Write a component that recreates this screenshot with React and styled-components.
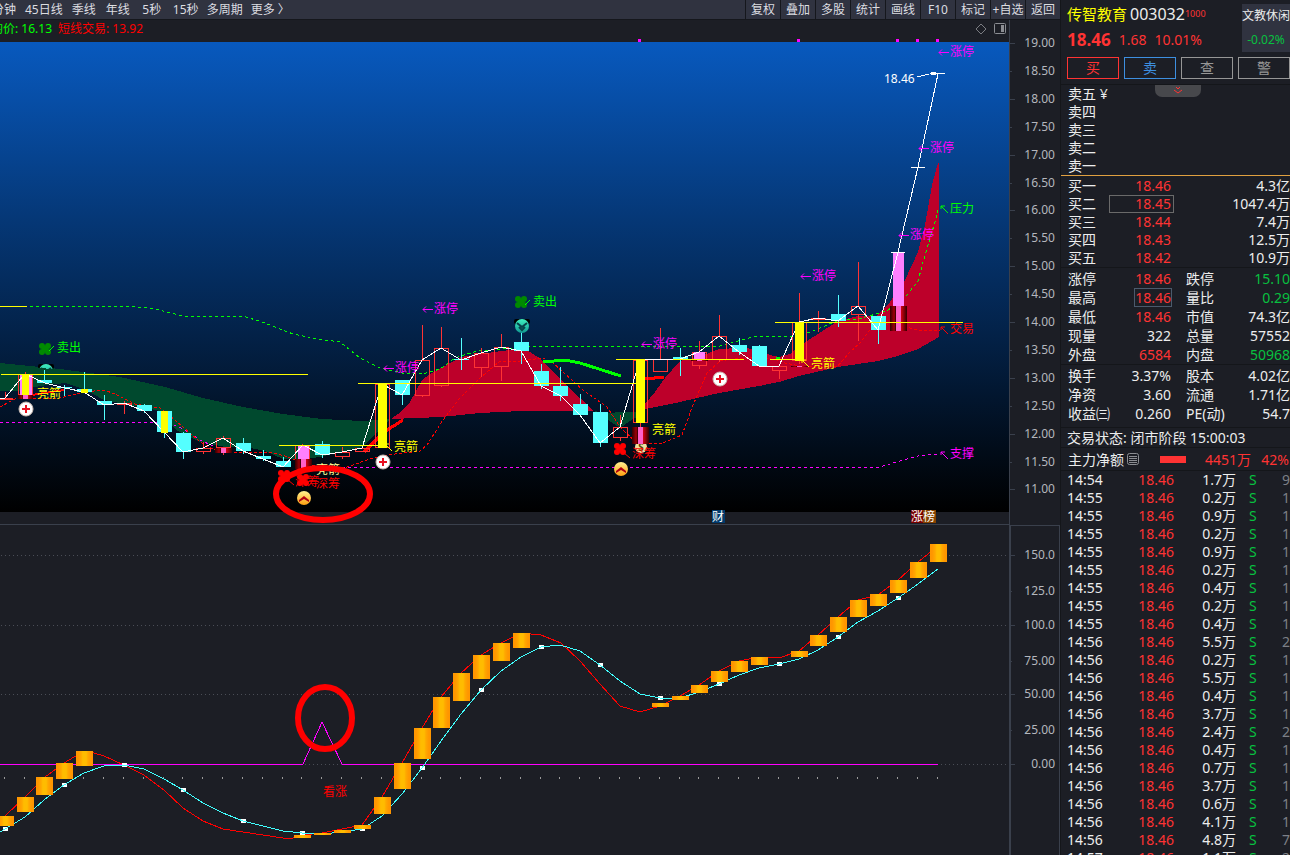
import React from "react";
import styled, { createGlobalStyle } from "styled-components";

const RED = "#ff3333";
const GREEN = "#08c040";
const WHITE = "#eceded";
const GREY = "#7d8087";

const GlobalStyle = createGlobalStyle`
  * {
    box-sizing: border-box;
  }
  body {
    margin: 0;
    background: #1c1e25;
    color: ${WHITE};
    font-family: "Noto Sans", "Noto Sans CJK SC", sans-serif;
    font-size: 14px;
    overflow: hidden;
  }
  button {
    font-family: inherit;
    padding: 0;
    margin: 0;
    cursor: pointer;
  }
`;

const Page = styled.div`
  display: grid;
  grid-template-columns: minmax(0, 1fr) 230px;
  height: 100vh;
  overflow: hidden;
`;
const Main = styled.main`
  display: flex;
  flex-direction: column;
  min-width: 0;
`;
const Toolbar = styled.nav`
  display: flex;
  justify-content: space-between;
  height: 20px;
  background: #303340;
  border-bottom: 1px solid #15171c;
  overflow: hidden;
`;
const Periods = styled.div`
  display: flex;
  margin-left: -13px;
`;
const PeriodButton = styled.button`
  min-width: 34px;
  padding: 0 4px;
  border: 0;
  background: none;
  color: #dcdde0;
  font-size: 12px;
  line-height: 19px;
  white-space: nowrap;
`;
const Tools = styled.div`
  display: flex;
`;
const ToolButton = styled.button`
  width: 35px;
  border: 0;
  border-left: 1px solid #15171c;
  background: none;
  color: #dcdde0;
  font-size: 12px;
  line-height: 19px;
  white-space: nowrap;
`;
const Charts = styled.div`
  flex: 1;
  display: grid;
  grid-template-columns: minmax(0, 1fr) 51px;
  grid-template-rows: 505px minmax(0, 1fr);
  min-height: 0;
`;
const Pane = styled.section`
  display: flex;
  flex-direction: column;
  min-width: 0;
  min-height: 0;
  border-bottom: ${(p) => (p.$divider ? "1px solid #3a404c" : "0")};
`;
const InfoBar = styled.div`
  display: flex;
  align-items: center;
  justify-content: space-between;
  height: 22px;
  padding: 0 3px 4px 0;
  font-size: 12px;
  line-height: 18px;
  overflow: hidden;
`;
const Indicators = styled.div`
  display: flex;
  gap: 6px;
  margin-left: -9px;
  white-space: nowrap;
`;
const Indicator = styled.span`
  color: ${(p) => p.$color};
`;
const InfoIcons = styled.div`
  display: flex;
  align-items: center;
  gap: 7px;
`;
const IconButton = styled.button`
  display: flex;
  border: 0;
  background: none;
`;
const PlotSvg = styled.svg`
  display: block;
  flex: 1;
  width: 100%;
  min-height: 0;
  overflow: visible;
  font-size: 12px;
`;
const PriceSvg = styled(PlotSvg)`
  background: linear-gradient(#0859be, #000) no-repeat;
  background-size: 100% 470px;
`;
const AxisSvg = styled.svg`
  display: block;
  width: 100%;
  height: 100%;
  font-size: 12px;
  fill: #b4b7bd;
  border-left: ${(p) => (p.$boxed ? "2px" : "1px")} solid #3a404c;
  border-top: ${(p) => (p.$boxed ? "1px solid #3a404c" : "0")};
  border-right: ${(p) => (p.$boxed ? "1px solid #3a404c" : "0")};
`;

const Sidebar = styled.aside`
  position: relative;
  display: flex;
  flex-direction: column;
  border-left: 1px solid #14161a;
  overflow: hidden;

  > * {
    flex-shrink: 0;
  }
`;
const Header = styled.header`
  display: flex;
  justify-content: space-between;
  height: 57px;
  padding-left: 6px;
`;
const TitleLine = styled.div`
  display: flex;
  align-items: center;
  height: 27px;
  white-space: nowrap;
  font-size: 16px;
`;
const StockName = styled.span`
  color: #ffff00;
  font-size: 15px;
  margin-right: 3px;
`;
const Tag = styled.sup`
  color: ${RED};
  font-family: "Liberation Sans Narrow", "Noto Sans", sans-serif;
  font-size: 9px;
  line-height: 9px;
`;
const PriceLine = styled.div`
  display: flex;
  align-items: center;
  gap: 8px;
  height: 24px;
  color: ${RED};
`;
const LastPrice = styled.strong`
  font-size: 17px;
`;
const Sector = styled.div`
  width: 48px;
  height: 48px;
  margin-top: 4px;
  background: #303340;
  font-size: 12px;
  line-height: 24px;
  text-align: center;
  white-space: nowrap;
`;
const SectorChange = styled.div`
  color: ${GREEN};
`;
const Actions = styled.div`
  display: grid;
  grid-template-columns: repeat(4, 1fr);
  gap: 5px;
  padding: 0 0 5px 6px;
  border-bottom: 1px solid #14161a;
`;
const ActionButton = styled.button`
  height: 22px;
  border: 1px solid ${(p) => p.$color};
  background: none;
  color: ${(p) => p.$color};
  font-size: 14px;
  line-height: 20px;
`;
const CollapseButton = styled.button`
  position: absolute;
  top: 85px;
  left: 94px;
  display: flex;
  justify-content: center;
  width: 46px;
  height: 12px;
  border: 0;
  border-radius: 0 0 7px 7px;
  background: #47484c;
`;
const Group = styled.div`
  padding: ${(p) => p.$pad || "0"};
  border-bottom: 1px solid ${(p) => p.$line || "#14161a"};
`;
const Table = styled.table`
  width: 100%;
  table-layout: fixed;
  border-collapse: collapse;
  line-height: ${(p) => p.$row}px;

  tr {
    height: ${(p) => p.$row}px;
  }
  th,
  td {
    padding: 0;
    font-weight: 400;
    white-space: nowrap;
  }
`;
const Label = styled.th`
  text-align: left;
  && {
    padding-left: ${(p) => p.$indent}px;
  }
`;
const Value = styled.td`
  color: ${(p) => p.$color || WHITE};
  text-align: right;
`;
const BookPrice = styled.div`
  height: 18px;
  padding-right: 3px;
  color: ${RED};
  outline: ${(p) => (p.$active ? "1px solid #6a6a6a" : "0")};
  outline-offset: -1px;
`;
const Boxed = styled.span`
  outline: ${(p) => (p.$active ? "1px solid #4b5a6c" : "0")};
  display: inline-block;
  line-height: 17px;
`;
const Side = styled.td`
  color: ${GREEN};
  && {
    padding-left: 13px;
  }
`;
const Status = styled.div`
  height: 20px;
  padding-left: 6px;
  border-bottom: 1px solid #14161a;
  line-height: 20px;
  white-space: nowrap;
`;
const FlowRow = styled.div`
  display: flex;
  align-items: center;
  height: 23px;
  padding: 0 1px 0 7px;
  border-bottom: 1px solid #14161a;
  color: ${RED};
  white-space: nowrap;
`;
const FlowLabel = styled.span`
  display: flex;
  align-items: center;
  gap: 3px;
  width: 92px;
  color: ${WHITE};
`;
const FlowBar = styled.span`
  width: 26px;
  height: 7px;
  background: ${RED};
`;
const FlowAmount = styled.span`
  flex: 1;
  text-align: right;
`;
const FlowRatio = styled.span`
  width: 38px;
  text-align: right;
`;

const periods = ["分钟", "45日线", "季线", "年线", "5秒", "15秒", "多周期", "更多 〉"];
const tools = ["复权", "叠加", "多股", "统计", "画线", "F10", "标记", "+自选", "返回"];
const actions = [
  ["买", RED],
  ["卖", "#3d8fe0"],
  ["查", "#969696"],
  ["警", "#969696"],
];
const asks = ["卖五 ¥", "卖四", "卖三", "卖二", "卖一"];
const bids = [
  ["买一", "18.46", "4.3亿"],
  ["买二", "18.45", "1047.4万"],
  ["买三", "18.44", "7.4万"],
  ["买四", "18.43", "12.5万"],
  ["买五", "18.42", "10.9万"],
];
const quoteStats = [
  ["涨停", "18.46", RED, "跌停", "15.10", GREEN],
  ["最高", "18.46", RED, "量比", "0.29", GREEN],
  ["最低", "18.46", RED, "市值", "74.3亿", WHITE],
  ["现量", "322", WHITE, "总量", "57552", WHITE],
  ["外盘", "6584", RED, "内盘", "50968", GREEN],
];
const baseStats = [
  ["换手", "3.37%", WHITE, "股本", "4.02亿", WHITE],
  ["净资", "3.60", WHITE, "流通", "1.71亿", WHITE],
  ["收益㈢", "0.260", WHITE, "PE(动)", "54.7", WHITE],
];
const trades = [
  ["14:54", "1.7万", 9],
  ["14:55", "0.2万", 1],
  ["14:55", "0.9万", 1],
  ["14:55", "0.2万", 1],
  ["14:55", "0.9万", 1],
  ["14:55", "0.2万", 1],
  ["14:55", "0.4万", 1],
  ["14:55", "0.2万", 1],
  ["14:55", "0.4万", 1],
  ["14:56", "5.5万", 2],
  ["14:56", "0.2万", 1],
  ["14:56", "5.5万", 1],
  ["14:56", "0.4万", 1],
  ["14:56", "3.7万", 1],
  ["14:56", "2.4万", 2],
  ["14:56", "0.4万", 1],
  ["14:56", "0.7万", 1],
  ["14:56", "3.7万", 1],
  ["14:56", "0.6万", 1],
  ["14:56", "4.1万", 1],
  ["14:56", "4.8万", 7],
  ["14:57", "1.1万", 2],
];

// x of the wick of candle i
const X = (i) => Math.floor(5.25 + 19.846 * i);

// [index, up, body top, body bottom, high, low]
const candles = [
  [0, 1, 398, 400, 392, 400],
  [1, 1, 374, 395, 372, 399],
  [2, 0, 380, 383, 370, 383],
  [3, 0, 387, 388, 385, 396],
  [4, 0, 389, 392, 372, 393],
  [5, 0, 401, 405, 395, 420],
  [6, 1, 403, 405, 401, 414],
  [7, 0, 405, 411, 404, 413],
  [8, 0, 411, 432, 411, 438],
  [9, 0, 433, 452, 432, 459],
  [10, 1, 448, 452, 442, 454],
  [11, 1, 438, 448, 436, 455],
  [12, 0, 443, 451, 438, 454],
  [13, 0, 456, 459, 450, 461],
  [14, 0, 461, 467, 457, 467],
  [15, 1, 445, 460, 444, 468],
  [16, 0, 444, 455, 441, 458],
  [17, 1, 452, 457, 447, 459],
  [18, 1, 448, 452, 446, 452],
  [19, 1, 384, 448, 384, 448],
  [20, 0, 380, 395, 380, 405],
  [21, 1, 360, 396, 325, 397],
  [22, 1, 348, 386, 327, 387],
  [23, 0, 359, 360, 338, 370],
  [24, 1, 353, 368, 348, 377],
  [25, 1, 347, 367, 334, 381],
  [26, 0, 342, 351, 325, 364],
  [27, 0, 371, 386, 364, 389],
  [28, 0, 386, 396, 367, 401],
  [29, 0, 404, 415, 394, 417],
  [30, 0, 412, 443, 404, 447],
  [31, 1, 427, 438, 415, 441],
  [32, 1, 360, 423, 360, 428],
  [33, 1, 359, 372, 328, 372],
  [34, 0, 357, 360, 348, 376],
  [35, 1, 352, 366, 341, 369],
  [36, 1, 336, 360, 315, 362],
  [37, 0, 345, 352, 338, 355],
  [38, 0, 346, 366, 345, 366],
  [39, 1, 366, 371, 366, 379],
  [40, 1, 322, 361, 293, 364],
  [41, 1, 318, 319, 311, 332],
  [42, 0, 314, 321, 295, 327],
  [43, 1, 306, 315, 262, 341],
  [44, 0, 316, 330, 316, 344],
];

const closeLine =
  "0,399 5,398 18,382 25,374 45,383 65,388 84,392 104,405 124,403 144,411 164,432 183,452 203,448 223,438 243,451 263,459 283,467 303,445 322,455 342,452 362,448 382,384 402,395 422,360 441,348 461,360 481,353 501,347 521,351 541,386 561,396 580,415 600,443 620,427 640,359 680,359 699,352 719,336 739,352 759,366 779,366 799,322 818,318 838,321 858,306 878,330 898,252 918,167 938,74";
const pressureLine =
  "0,306 130,306 155,309 183,316 243,316 262,322 293,334 318,339 340,342 360,358 380,368 402,373 423,374 440,369 455,358 477,351 513,348 530,346 720,346 753,337 800,336 837,321 858,319 887,311 907,295 918,281 925,255 935,222 938,210";
const tradeLine =
  "0,407 15,399 60,398 84,392 104,390 115,394 135,404 160,408 175,420 200,442 215,450 232,452 270,452 285,456 300,462 330,470 347,467 370,459 387,455 420,451 427,445 443,420 460,398 480,378 500,361 520,361 543,358 553,363 563,372 583,390 607,407 620,427 637,443 663,443 682,435 693,405 707,373 720,361 733,359 760,357 777,360 785,363 800,366 837,367 850,352 860,343 873,326 880,323 907,327 917,330 940,330";

const priceLabels = [
  [57, 348, "卖出", "#00ff00"],
  [533, 302, "卖出", "#00ff00"],
  [37, 394, "亮箭", "#ffff00"],
  [394, 447, "亮箭", "#ffff00"],
  [652, 430, "亮箭", "#ffff00"],
  [811, 364, "亮箭", "#ffff00"],
  [316, 470, "亮箭", "#ffff99"],
  [295, 482, "深筹", "#ff0000"],
  [316, 484, "深筹", "#ff0000"],
  [632, 454, "深筹", "#ff0000"],
  [950, 209, "压力", "#00ff00"],
  [950, 329, "交易", "#ff0000"],
  [950, 454, "支撑", "#ff00ff"],
  [884, 79, "18.46", "#ffffff"],
];
const limitUps = [
  [422, 309],
  [383, 368],
  [641, 344],
  [800, 276],
  [898, 235],
  [918, 148],
  [938, 52],
];

// [index, top, bottom]
const goldBars = [
  [0, 816, 826], [1, 797, 812], [2, 777, 795], [3, 763, 779], [4, 751, 766],
  [15, 835, 838], [16, 833, 835], [17, 830, 833], [18, 825, 829], [19, 797, 814],
  [20, 763, 789], [21, 728, 759], [22, 697, 728], [23, 673, 701], [24, 655, 679],
  [25, 643, 661], [26, 633, 648], [33, 703, 707], [34, 696, 700], [35, 685, 693],
  [36, 671, 682], [37, 661, 672], [38, 657, 665], [40, 651, 657], [41, 635, 646],
  [42, 617, 632], [43, 600, 617], [44, 594, 606], [45, 580, 593], [46, 562, 578],
  [47, 544, 562],
];
const fastLine =
  "5,816 25,797 45,777 64,763 84,751 94,753 104,756 124,765 144,775 164,790 183,808 203,821 223,829 243,832 263,835 283,838 293,838 303,835 322,833 342,829 362,825 382,797 402,763 422,728 441,697 461,673 481,655 501,643 521,633 541,635 561,643 580,661 600,684 620,706 640,712 660,706 680,696 699,685 719,671 739,661 759,657 779,658 799,651 818,635 838,617 858,600 878,595 898,580 918,562 938,546";
const slowPoints = [
  829, 817, 800, 785, 773, 766, 765, 769, 779, 790, 803, 813, 821, 826, 831, 833,
  834, 832, 829, 816, 794, 768, 741, 714, 690, 671, 657, 647, 645, 651, 665, 681,
  694, 698, 698, 692, 684, 675, 668, 664, 659, 650, 637, 622, 611, 598, 584, 569,
];
const slowLine = "0,832 " + slowPoints.map((y, i) => `${X(i)},${y}`).join(" ");

const Candle = ({ data }) => {
  const [i, up, top, bottom, high, low] = data;
  const x = X(i);
  if (!up) {
    return (
      <g fill="#54ffff">
        <rect x={x} y={high} width="1" height={low - high} />
        <rect x={x - 7} y={top} width="15" height={bottom - top} />
      </g>
    );
  }
  return (
    <g fill="none" stroke={RED}>
      <path d={`M${x + 0.5} ${high}V${top}M${x + 0.5} ${bottom}V${low}`} />
      <rect x={x - 6.5} y={top + 0.5} width="14" height={Math.max(bottom - top - 1, 1)} />
    </g>
  );
};

const Clover = ({ x, y, color }) => (
  <g fill={color}>
    <circle cx={x - 3} cy={y - 3} r="3" />
    <circle cx={x + 3} cy={y - 3} r="3" />
    <circle cx={x - 3} cy={y + 3} r="3" />
    <circle cx={x + 3} cy={y + 3} r="3" />
    <rect x={x - 3} y={y - 3} width="6" height="6" />
  </g>
);

const CrossMark = ({ x, y }) => (
  <g>
    <circle cx={x} cy={y} r="7" fill="#fff" stroke="#c9b8b0" />
    <path d={`M${x - 4} ${y}h8M${x} ${y - 4}v8`} stroke="#e81020" strokeWidth="2" />
  </g>
);

const UpMark = ({ x, y }) => (
  <g>
    <circle cx={x} cy={y} r="7" fill="url(#coin)" />
    <path
      d={`M${x - 5} ${y + 2}l5 -4l5 4v2l-5 -3l-5 3z`}
      fill="#b00010"
    />
  </g>
);

const DownMark = ({ x, y }) => (
  <g>
    <rect x={x - 8} y={y - 7} width="16" height="5" rx="2" fill="#000" />
    <circle cx={x} cy={y} r="7" fill="url(#teal)" />
    <path
      d={`M${x - 5} ${y - 3}l5 4l5 -4M${x - 3} ${y + 1}l3 3l3 -3`}
      fill="none"
      stroke="#06424a"
      strokeWidth="2"
    />
  </g>
);

// short diagonal pointer towards the upper left
const Pointer = ({ x, y, color }) => (
  <path
    d={`M${x + 7} ${y + 7}L${x} ${y}M${x} ${y + 3}V${y}H${x + 4}`}
    fill="none"
    stroke={color}
  />
);

const PriceChart = () => (
  <PriceSvg role="img" aria-label="K线图">
    <defs>
      <linearGradient id="blood">
        <stop offset="0" stopColor="#300" />
        <stop offset="0.25" stopColor="#a00008" />
        <stop offset="0.34" stopColor="#300" />
        <stop offset="0.36" stopColor="#ff60c8" />
        <stop offset="0.64" stopColor="#ff60c8" />
        <stop offset="0.66" stopColor="#d00010" />
        <stop offset="1" stopColor="#300" />
      </linearGradient>
      <linearGradient id="coin" x2="0" y2="1">
        <stop offset="0" stopColor="#fff090" />
        <stop offset="1" stopColor="#ffa010" />
      </linearGradient>
      <linearGradient id="teal" x2="0" y2="1">
        <stop offset="0" stopColor="#40f0c0" />
        <stop offset="1" stopColor="#109890" />
      </linearGradient>
    </defs>
    <g transform="translate(0 -42)">
      <g shapeRendering="crispEdges">
        <polygon
          fill="#00492e"
          points="0,363 60,369 120,377 165,387 203,398 243,407 283,414 322,419 362,421 391,419 362,447 320,457 303,459 283,459 265,451 250,448 225,447 200,442 176,430 160,411 140,407 104,400 84,389 65,383 40,386 18,391 0,391"
        />
        <polygon
          fill="#bd002a"
          points="391,419 402,411 410,402 422,380 430,374 441,368 461,357 481,354 501,351 521,349 530,352 541,359 561,380 580,398 593,411 521,411 480,413 441,417"
        />
        <polygon fill="#00492e" points="594,411 605,413 646,411 630,421 620,428 608,420" />
        <polygon
          fill="#bd002a"
          points="640,410 655,392 665,378 680,361 699,357 719,349 739,348 759,349 770,355 779,357 790,354 799,346 818,334 838,321 858,316 876,316 890,302 905,280 918,252 925,225 932,185 938,163 939,163 939,337 925,345 918,349 898,356 878,361 838,367 799,376 779,382 759,386 719,393 680,402"
        />
        <g fill="none">
          <polyline points={pressureLine} stroke="#00ff00" strokeDasharray="3 3" />
          <polyline
            points="0,422 157,422 172,424 185,430 200,440 215,447"
            stroke="#ff00ff"
            strokeDasharray="3 3"
          />
          <polyline
            points="330,467 880,467 900,461 918,456 938,454"
            stroke="#ff00ff"
            strokeDasharray="3 3"
          />
          <polyline points={tradeLine} stroke="#ff0000" strokeDasharray="3 2" />
          <polyline points="32,395 64,390" stroke="#ff0000" strokeWidth="2" />
          <polyline points="364,452 384,432 403,420" stroke="#ff0000" strokeWidth="3" />
          <polyline points="645,379 664,377" stroke="#ff0000" strokeWidth="3" />
          <polyline points="543,362 565,360 580,363 621,376" stroke="#00ff00" strokeWidth="3" />
          <path d="M776 358h4" stroke="#00ff00" strokeWidth="3" />
        </g>
      </g>
      <DownMark x={46} y={371} />
      <g shapeRendering="crispEdges">
        <polygon fill="#00492e" points="36,368 56,369 56,380 36,380" />
        {candles.map((c) => (
          <Candle key={c[0]} data={c} />
        ))}
        <g fill="#ff80ff">
          <rect x="20" y="374" width="12" height="21" />
          <rect x="298" y="445" width="11" height="15" />
          <rect x="694" y="352" width="11" height="7" />
          <rect x="893" y="252" width="11" height="54" />
        </g>
        <g fill="url(#blood)">
          <rect x="18" y="395" width="15" height="4" />
          <rect x="215" y="448" width="17" height="5" />
          <rect x="295" y="459" width="17" height="10" />
          <rect x="691" y="359" width="17" height="2" />
          <rect x="791" y="366" width="17" height="1" />
          <rect x="890" y="306" width="17" height="25" />
        </g>
        <polyline points={closeLine} fill="none" stroke="#fff" />
        <path
          d="M911 167.5h14M930 73.5h15M891 252.5h14M917 77l12 -3"
          fill="none"
          stroke="#fff"
        />
        <path d="M931 72h5v3h-5z" fill="#fff" />
        <g fill="#ffff00">
          <rect x="22" y="374" width="7" height="21" />
          <rect x="81" y="389" width="7" height="4" />
          <rect x="161" y="411" width="7" height="22" />
          <rect x="378" y="383" width="9" height="65" />
          <rect x="636" y="359" width="9" height="64" />
          <rect x="795" y="322" width="9" height="39" />
          <rect x="0" y="306" width="27" height="1" />
          <rect x="1" y="374" width="307" height="1" />
          <rect x="279" y="445" width="103" height="1" />
          <rect x="358" y="383" width="282" height="1" />
          <rect x="616" y="359" width="128" height="1" />
          <rect x="770" y="359" width="34" height="1" />
          <rect x="775" y="322" width="188" height="1" />
        </g>
        <rect x="645" y="359" width="28" height="1" fill="#fff" />
        <g fill="#ff00ff">
          {[638, 797, 896, 916, 936].map((x) => (
            <rect key={x} x={x} y="39" width="3" height="3" />
          ))}
        </g>
      </g>
      <Clover x={45} y={349} color="#008a00" />
      <Clover x={521} y={302} color="#008a00" />
      <path d="M49 351l5 -5M525 305l5 -5" stroke="#00ff00" />
      <Clover x={284} y={476} color="#ff0000" />
      <Clover x={303} y={480} color="#ff0000" />
      <Clover x={620} y={449} color="#ff0000" />
      <path d="M288 480l6 5M624 453l6 5" stroke="#ff0000" />
      <CrossMark x={26} y={409} />
      <CrossMark x={383} y={462} />
      <CrossMark x={720} y={379} />
      <UpMark x={304} y={498} />
      <UpMark x={621} y={469} />
      <DownMark x={522} y={326} />
      <circle cx="641" cy="447" r="6" fill="#f0e0a0" />
      <text x="641" y="451" fill="#604000" fontSize="10" fontWeight="700" textAnchor="middle">
        S
      </text>
      <rect x="632" y="427" width="17" height="17" fill="url(#blood)" />
      <Pointer x={941} y={206} color="#00ff00" />
      <Pointer x={941} y={327} color="#ff0000" />
      <Pointer x={941} y={452} color="#ff00ff" />
      <Pointer x={385} y={444} color="#ffff00" />
      <Pointer x={802} y={360} color="#ffff00" />
      {priceLabels.map(([x, y, text, color]) => (
        <text key={`${x}-${y}`} x={x} y={y + 4} fill={color}>
          {text}
        </text>
      ))}
      {limitUps.map(([x, y]) => (
        <g key={x}>
          <path
            d={`M${x + 11} ${y + 0.5}H${x + 1}M${x + 4} ${y - 2.5}l-3 3l3 3`}
            fill="none"
            stroke="#ff00ff"
          />
          <text x={x + 12} y={y + 4} fill="#ff00ff">
            涨停
          </text>
        </g>
      ))}
      <rect x="712" y="510" width="13" height="13" fill="#003a6c" />
      <rect x="911" y="510" width="12" height="13" fill="#780000" />
      <rect x="923" y="510" width="13" height="13" fill="#854200" />
      <text x="712" y="521" fill="#fff">
        财
      </text>
      <text x="911" y="521" fill="#fff">
        涨榜
      </text>
      <ellipse
        cx="323"
        cy="494"
        rx="47"
        ry="26"
        fill="none"
        stroke="#ff0000"
        strokeWidth="6"
      />
    </g>
  </PriceSvg>
);

const TrendChart = () => (
  <PlotSvg role="img" aria-label="指标图">
    <defs>
      <linearGradient id="gold">
        <stop offset="0.12" stopColor="#ff9600" />
        <stop offset="0.3" stopColor="#ffa800" />
        <stop offset="0.4" stopColor="#ffbc00" />
        <stop offset="0.6" stopColor="#ffbc00" />
        <stop offset="0.7" stopColor="#ffa800" />
        <stop offset="0.88" stopColor="#ff9600" />
      </linearGradient>
    </defs>
    <g transform="translate(0 -525)" shapeRendering="crispEdges">
      {[555, 625, 694, 764].map((y) => (
        <path key={y} d={`M1 ${y + 0.5}H1008`} stroke="#4a4d56" strokeDasharray="1 3" />
      ))}
      {slowPoints.map((y, i) => (
        <rect key={i} x={X(i) - 1} y="777" width="1" height="2" fill="#9a9a9a" />
      ))}
      <polyline points={fastLine} fill="none" stroke="#ff0000" />
      <polyline
        points="0,764 303,764 322,722 342,764 938,764"
        fill="none"
        stroke="#ff00ff"
      />
      {slowPoints.map(
        (y, i) =>
          i % 3 === 0 && (
            <rect key={i} x={X(i) - 2} y={y - 2} width="5" height="4" fill="#fff" />
          )
      )}
      <polyline points={slowLine} fill="none" stroke="#40ffff" />
      {goldBars.map(([i, top, bottom]) => (
        <rect
          key={i}
          x={X(i) - 8}
          y={top}
          width="17"
          height={bottom - top}
          fill="url(#gold)"
        />
      ))}
      <text x="323" y="796" fill="#ff0000">
        看涨
      </text>
      <ellipse
        cx="325"
        cy="718"
        rx="27"
        ry="31"
        fill="none"
        stroke="#ff0000"
        strokeWidth="6"
        shapeRendering="auto"
      />
    </g>
  </PlotSvg>
);

const priceTicks = Array.from({ length: 17 }, (_, i) => ({
  y: Math.round(43 + i * 27.9),
  text: (19 - i * 0.5).toFixed(2),
}));
const trendTicks = [
  [555, "150.0"],
  [591, "125.0"],
  [625, "100.0"],
  [661, "75.00"],
  [694, "50.00"],
  [730, "25.00"],
  [764, "0.00"],
];

const PriceAxis = () => (
  <AxisSvg>
    <g transform="translate(0 -20)">
      {priceTicks.map(({ y, text }, i) => (
        <g key={text}>
          <rect y={y} width={i % 2 ? 2 : 5} height="1" fill="#3a404c" />
          <text x="45" y={y + 4} textAnchor="end">
            {text}
          </text>
        </g>
      ))}
    </g>
  </AxisSvg>
);

const TrendAxis = () => (
  <AxisSvg $boxed>
    <g transform="translate(0 -526)">
      {trendTicks.map(([y, text], i) => (
        <g key={text}>
          <rect y={y} width={i % 2 ? 1 : 4} height="1" fill="#3a404c" />
          <text x="44" y={y + 4} textAnchor="end">
            {text}
          </text>
        </g>
      ))}
    </g>
  </AxisSvg>
);

const StatTable = ({ rows }) => (
  <Table $row={19}>
    <colgroup>
      <col width="55" />
      <col width="55" />
      <col width="60" />
      <col />
    </colgroup>
    <tbody>
      {rows.map(([name, value, color, name2, value2, color2]) => (
        <tr key={name}>
          <Label scope="row" $indent={7}>
            {name}
          </Label>
          <Value $color={color}>
            <Boxed $active={name === "最高"}>{value}</Boxed>
          </Value>
          <Label scope="row" $indent={15}>
            {name2}
          </Label>
          <Value $color={color2}>{value2}</Value>
        </tr>
      ))}
    </tbody>
  </Table>
);

const OrderBook = ({ rows }) => (
  <Table $row={18}>
    <colgroup>
      <col width="48" />
      <col width="65" />
      <col />
    </colgroup>
    <tbody>
      {rows.map(([name, price, volume]) => (
        <tr key={name}>
          <Label scope="row" $indent={7}>
            {name}
          </Label>
          <Value>
            {price && <BookPrice $active={name === "买二"}>{price}</BookPrice>}
          </Value>
          <Value>{volume}</Value>
        </tr>
      ))}
    </tbody>
  </Table>
);

const App = () => {
  return (
    <>
      <GlobalStyle />
      <Page>
        <Main>
          <Toolbar>
            <Periods>
              {periods.map((name) => (
                <PeriodButton key={name}>{name}</PeriodButton>
              ))}
            </Periods>
            <Tools>
              {tools.map((name) => (
                <ToolButton key={name}>{name}</ToolButton>
              ))}
            </Tools>
          </Toolbar>
          <Charts>
            <Pane $divider>
              <InfoBar>
                <Indicators>
                  <Indicator $color="#00ff00">均价: 16.13</Indicator>
                  <Indicator $color="#ff0000">短线交易: 13.92</Indicator>
                </Indicators>
                <InfoIcons>
                  <IconButton aria-label="标记">
                    <svg width="12" height="12" fill="none" stroke="#7b7d82">
                      <path d="M6 1l5 5l-5 5l-5 -5z" />
                    </svg>
                  </IconButton>
                  <IconButton aria-label="侧栏">
                    <svg width="12" height="12" fill="none" stroke="#8b8d92">
                      <rect x="0.5" y="0.5" width="11" height="10" rx="1" />
                      <rect x="7" y="2" width="3" height="7" fill="#8b8d92" stroke="none" />
                    </svg>
                  </IconButton>
                </InfoIcons>
              </InfoBar>
              <PriceChart />
            </Pane>
            <PriceAxis />
            <Pane>
              <TrendChart />
            </Pane>
            <TrendAxis />
          </Charts>
        </Main>
        <Sidebar>
          <Header>
            <div>
              <TitleLine>
                <StockName>传智教育</StockName>
                003032
                <Tag>1000</Tag>
              </TitleLine>
              <PriceLine>
                <LastPrice>18.46</LastPrice>
                <span>1.68</span>
                <span>10.01%</span>
              </PriceLine>
            </div>
            <Sector>
              文教休闲
              <SectorChange>-0.02%</SectorChange>
            </Sector>
          </Header>
          <Actions>
            {actions.map(([name, color]) => (
              <ActionButton key={name} $color={color}>
                {name}
              </ActionButton>
            ))}
          </Actions>
          <CollapseButton aria-label="展开">
            <svg width="12" height="10" fill="none" stroke={RED}>
              <path d="M4 2l2 2l2 -2M2 5l4 3l4 -3" />
            </svg>
          </CollapseButton>
          <Group $line="#e0a040">
            <OrderBook rows={asks.map((name) => [name])} />
          </Group>
          <Group $pad="1px 0 0">
            <OrderBook rows={bids} />
          </Group>
          <Group $pad="1px 0 0">
            <StatTable rows={quoteStats} />
          </Group>
          <Group $pad="1px 0 4px">
            <StatTable rows={baseStats} />
          </Group>
          <Status>交易状态: 闭市阶段 15:00:03</Status>
          <FlowRow>
            <FlowLabel>
              主力净额
              <svg width="12" height="12" fill="none" stroke="#8b8d92">
                <rect x="0.5" y="0.5" width="11" height="11" rx="2" />
                <path d="M2 3.5h8M2 5.5h8M2 7.5h8M2 9.5h8" />
              </svg>
            </FlowLabel>
            <FlowBar />
            <FlowAmount>4451万</FlowAmount>
            <FlowRatio>42%</FlowRatio>
          </FlowRow>
          <Table $row={18}>
            <colgroup>
              <col width="50" />
              <col width="63" />
              <col width="62" />
              <col width="30" />
              <col />
            </colgroup>
            <tbody>
              {trades.map(([time, volume, count], i) => (
                <tr key={i}>
                  <Label $indent={6}>{time}</Label>
                  <Value $color={RED}>18.46</Value>
                  <Value>{volume}</Value>
                  <Side>S</Side>
                  <Value $color={GREY}>{count}</Value>
                </tr>
              ))}
            </tbody>
          </Table>
        </Sidebar>
      </Page>
    </>
  );
};

export default App;
